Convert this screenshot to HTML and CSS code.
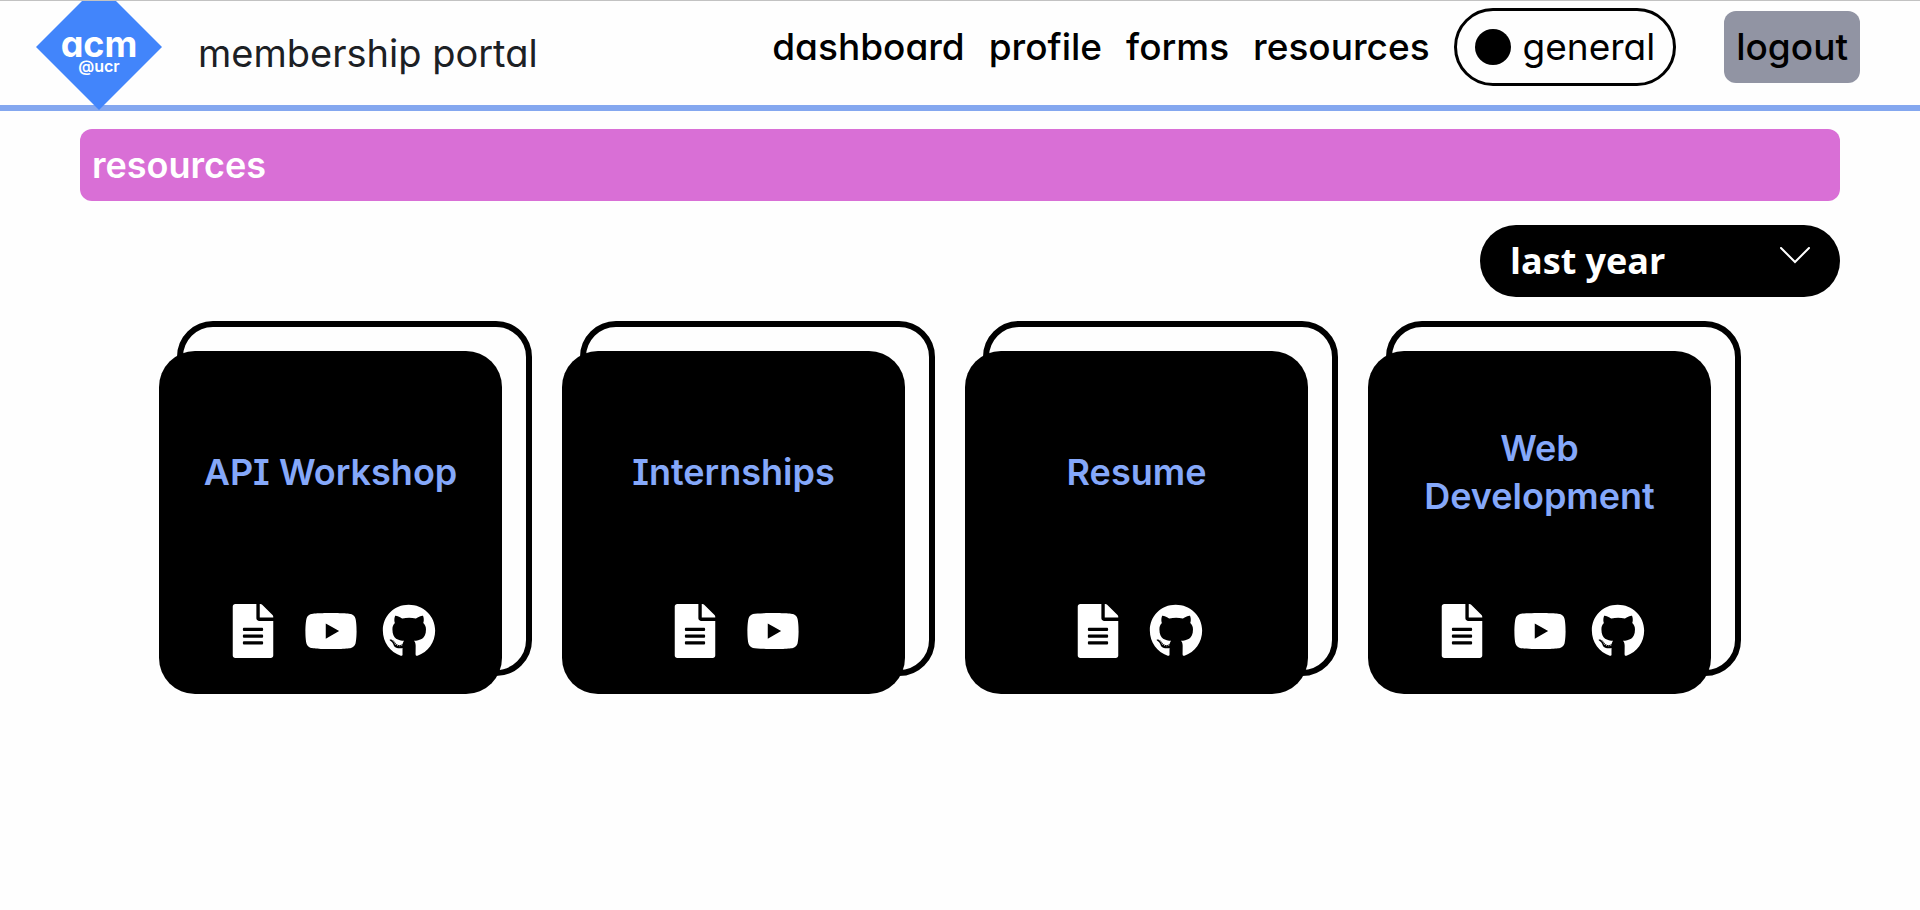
FILE: index.html
```html
<!DOCTYPE html>
<html lang="en">
<head>
  <meta charset="utf-8">
  <meta name="viewport" content="width=device-width, initial-scale=1">
  <title>membership portal</title>
  <link rel="stylesheet" href="styles.css">
</head>
<body>
  <svg class="sprite" aria-hidden="true">
    <symbol id="icon-file" viewBox="0 0 384 512">
      <path d="M224 136V0H24C10.700 0 0 10.700 0 24v464c0 13.300 10.700 24 24 24h336c13.300 0 24-10.700 24-24V160H248c-13.200 0-24-10.800-24-24zm64 236c0 6.600-5.400 12-12 12H108c-6.600 0-12-5.400-12-12v-8c0-6.600 5.400-12 12-12h168c6.600 0 12 5.400 12 12v8zm0-64c0 6.600-5.400 12-12 12H108c-6.600 0-12-5.400-12-12v-8c0-6.600 5.400-12 12-12h168c6.600 0 12 5.400 12 12v8zm0-72v8c0 6.600-5.400 12-12 12H108c-6.600 0-12-5.400-12-12v-8c0-6.600 5.400-12 12-12h168c6.600 0 12 5.400 12 12zm96-114.100v6.100H256V0h6.100c6.400 0 12.500 2.500 17 7l97.900 98c4.500 4.500 7 10.600 7 16.900z"/>
    </symbol>
    <symbol id="icon-youtube" viewBox="0 0 576 512">
      <path d="M549.655 124.083c-6.281-23.650-24.787-42.276-48.284-48.597C458.781 64 288 64 288 64S117.220 64 74.629 75.486c-23.497 6.322-42.003 24.947-48.284 48.597-11.412 42.867-11.412 132.305-11.412 132.305s0 89.438 11.412 132.305c6.281 23.650 24.787 41.500 48.284 47.821C117.220 448 288 448 288 448s170.780 0 213.371-11.486c23.497-6.321 42.003-24.171 48.284-47.821 11.412-42.867 11.412-132.305 11.412-132.305s0-89.438-11.412-132.305zm-317.510 213.508V175.185l142.739 81.205-142.739 81.201z"/>
    </symbol>
    <symbol id="icon-github" viewBox="0 0 496 512">
      <path d="M165.900 397.400c0 2-2.300 3.600-5.200 3.600-3.300.3-5.600-1.300-5.600-3.600 0-2 2.300-3.600 5.200-3.600 3-.3 5.600 1.300 5.600 3.600zm-31.100-4.500c-.7 2 1.300 4.300 4.300 4.900 2.600 1 5.600 0 6.200-2s-1.300-4.300-4.300-5.200c-2.600-.7-5.500.3-6.200 2.300zm44.200-1.700c-2.900.7-4.900 2.600-4.600 4.900.3 2 2.900 3.300 5.900 2.600 2.900-.7 4.900-2.600 4.600-4.600-.3-1.900-3-3.200-5.900-2.900zM244.800 8C106.100 8 0 113.300 0 252c0 110.900 69.800 205.800 169.500 239.200 12.800 2.300 17.300-5.600 17.300-12.100 0-6.200-.3-40.400-.3-61.400 0 0-70 15-84.700-29.800 0 0-11.400-29.100-27.800-36.600 0 0-22.900-15.700 1.600-15.400 0 0 24.900 2 38.600 25.800 21.900 38.600 58.600 27.500 72.900 20.900 2.300-16 8.800-27.100 16-33.700-55.900-6.200-112.300-14.300-112.300-110.500 0-27.500 7.600-41.300 23.600-58.900-2.600-6.500-11.100-33.300 2.600-67.900 20.900-6.500 69 27 69 27 20-5.600 41.500-8.500 62.800-8.500s42.800 2.900 62.800 8.500c0 0 48.100-33.600 69-27 13.700 34.700 5.200 61.400 2.600 67.900 16 17.700 25.800 31.500 25.800 58.900 0 96.500-58.900 104.200-114.800 110.500 9.200 7.900 17 22.900 17 46.400 0 33.700-.3 75.400-.3 83.600 0 6.500 4.600 14.400 17.300 12.100C428.200 457.800 496 362.900 496 252 496 113.300 383.500 8 244.800 8zM97.200 352.900c-1.300 1-1 3.300.7 5.200 1.600 1.600 3.900 2.300 5.200 1 1.300-1 1-3.300-.7-5.200-1.600-1.600-3.900-2.300-5.200-1zm-10.800-8.100c-.7 1.300.3 2.900 2.300 3.900 1.600 1 3.600.7 4.300-.7.7-1.300-.3-2.900-2.300-3.900-2-.6-3.600-.3-4.300.7zm32.400 35.600c-1.600 1.300-1 4.300 1.300 6.200 2.300 2.300 5.200 2.600 6.500 1 1.300-1.300.7-4.300-1.300-6.200-2.200-2.300-5.200-2.600-6.500-1zm-11.400-14.700c-1.600 1-1.600 3.600 0 5.900 1.600 2.300 4.300 3.300 5.600 2.300 1.600-1.300 1.600-3.900 0-6.200-1.400-2.300-4-3.300-5.600-2z"/>
    </symbol>
  </svg>

  <header class="header">
    <a class="brand" href="#">
      <svg class="logo" viewBox="0 0 126 110" role="img" aria-label="acm at ucr">
        <polygon class="logo-shape" points="63,-17 126,46 63,109 0,46"/>
        <text class="logo-name" x="63" y="56">acm</text>
        <text class="logo-school" x="63" y="71">@ucr</text>
      </svg>
      <span class="brand-name">membership portal</span>
    </a>
    <nav class="nav">
      <a class="nav-link" href="#">dashboard</a>
      <a class="nav-link" href="#">profile</a>
      <a class="nav-link" href="#">forms</a>
      <a class="nav-link" href="#">resources</a>
      <button class="role" type="button"><span class="role-dot"></span>general</button>
      <button class="logout" type="button">logout</button>
    </nav>
  </header>

  <main class="main">
    <h1 class="banner">resources</h1>

    <div class="filter">
      <select class="filter-select" aria-label="period">
        <option>last year</option>
        <option>this year</option>
      </select>
      <svg class="filter-arrow" viewBox="0 0 30 17" aria-hidden="true"><path d="M1 1l14 14L29 1"/></svg>
    </div>

    <section class="cards">
      <article class="card">
        <div class="card-face">
          <h2 class="card-title">API Workshop</h2>
          <div class="card-links">
            <a href="#" aria-label="document"><svg class="icon"><use href="#icon-file"/></svg></a>
            <a href="#" aria-label="video"><svg class="icon"><use href="#icon-youtube"/></svg></a>
            <a href="#" aria-label="code"><svg class="icon"><use href="#icon-github"/></svg></a>
          </div>
        </div>
      </article>
      <article class="card">
        <div class="card-face">
          <h2 class="card-title">Internships</h2>
          <div class="card-links">
            <a href="#" aria-label="document"><svg class="icon"><use href="#icon-file"/></svg></a>
            <a href="#" aria-label="video"><svg class="icon"><use href="#icon-youtube"/></svg></a>
          </div>
        </div>
      </article>
      <article class="card">
        <div class="card-face">
          <h2 class="card-title">Resume</h2>
          <div class="card-links">
            <a href="#" aria-label="document"><svg class="icon"><use href="#icon-file"/></svg></a>
            <a href="#" aria-label="code"><svg class="icon"><use href="#icon-github"/></svg></a>
          </div>
        </div>
      </article>
      <article class="card">
        <div class="card-face">
          <h2 class="card-title">Web Development</h2>
          <div class="card-links">
            <a href="#" aria-label="document"><svg class="icon"><use href="#icon-file"/></svg></a>
            <a href="#" aria-label="video"><svg class="icon"><use href="#icon-youtube"/></svg></a>
            <a href="#" aria-label="code"><svg class="icon"><use href="#icon-github"/></svg></a>
          </div>
        </div>
      </article>
    </section>
  </main>
</body>
</html>
```
FILE: styles.css
```css
* {
  box-sizing: border-box;
}

body {
  margin: 0;
  background: #fefefe;
  color: #000;
  font-family: Inter, "Open Sans", sans-serif;
  font-size: 36px;
  line-height: 48px;
  /* single-storey a, serifed capital I */
  font-feature-settings: "cv11", "cv08";
}

a {
  color: inherit;
  text-decoration: none;
}

button,
select {
  font: inherit;
  font-feature-settings: inherit;
  color: inherit;
  cursor: pointer;
}

.sprite {
  display: none;
}

.header {
  display: flex;
  justify-content: space-between;
  padding: 0 60px 0 36px;
  border-top: 1px solid #c2c2c2;
  border-bottom: 6px solid #84a7ef;
}

.brand {
  display: flex;
  align-items: center;
  gap: 36px;
  color: #1c2024;
  font-size: 38px;
}

.logo {
  display: block;
  width: 126px;
  height: 110px;
  margin-bottom: -6px;
}

.logo-shape {
  fill: #4285fb;
}

.logo-name,
.logo-school {
  fill: #fff;
  text-anchor: middle;
}

.logo-name {
  font-size: 36px;
  font-weight: 700;
}

.logo-school {
  font-size: 16px;
  font-weight: 600;
}

.nav {
  display: flex;
  align-items: center;
  align-self: flex-start;
  gap: 24px;
  padding-top: 7px;
  font-size: 37px;
}

.nav-link {
  font-weight: 500;
}

.role {
  display: flex;
  align-items: center;
  gap: 12px;
  height: 78px;
  padding: 0 18px;
  border: 3px solid #000;
  border-radius: 39px;
  background: transparent;
}

.role-dot {
  width: 36px;
  height: 36px;
  border-radius: 50%;
  background: #000;
}

.logout {
  margin-left: 24px;
  padding: 12px;
  border: 0;
  border-radius: 12px;
  background: #9194a3;
  font-weight: 500;
}

.main {
  padding: 18px 80px;
}

.banner {
  margin: 0;
  padding: 12px;
  border-radius: 12px;
  background: #d96fd6;
  color: #fff;
  font-size: 36px;
  font-weight: 600;
}

.filter {
  position: relative;
  width: 360px;
  margin: 24px 0 24px auto;
}

.filter-select {
  display: block;
  width: 100%;
  height: 72px;
  padding: 0 72px 0 30px;
  border: 0;
  border-radius: 36px;
  appearance: none;
  background: #000;
  color: #fff;
  font-family: "Open Sans", "Noto Sans", sans-serif;
  font-weight: 700;
}

.filter-arrow {
  position: absolute;
  top: 22px;
  right: 30px;
  width: 30px;
  height: 17px;
  fill: none;
  stroke: #fff;
  stroke-width: 2;
  stroke-linecap: round;
  pointer-events: none;
}

.cards {
  display: grid;
  grid-template-columns: repeat(auto-fit, minmax(320px, 1fr));
  gap: 30px;
  padding: 0 99px 0 79px;
}

/* The outline peeks out above and to the right of the solid face. */
.card {
  position: relative;
  padding: 30px 30px 0 0;
}

.card::before {
  content: "";
  position: absolute;
  inset: 0 0 18px 18px;
  border: 6px solid #000;
  border-radius: 36px;
}

.card-face {
  position: relative;
  display: flex;
  flex-direction: column;
  aspect-ratio: 1;
  padding: 0 36px 36px;
  border-radius: 36px;
  background: #000;
}

.card-title {
  display: flex;
  flex: 1;
  align-items: center;
  justify-content: center;
  margin: 0;
  color: #85a8fa;
  font-size: 36px;
  font-weight: 600;
  text-align: center;
}

.card-links {
  display: flex;
  justify-content: center;
  gap: 24px;
  margin-top: 12px;
}

.icon {
  display: block;
  width: 54px;
  height: 54px;
  fill: #fff;
}
```
